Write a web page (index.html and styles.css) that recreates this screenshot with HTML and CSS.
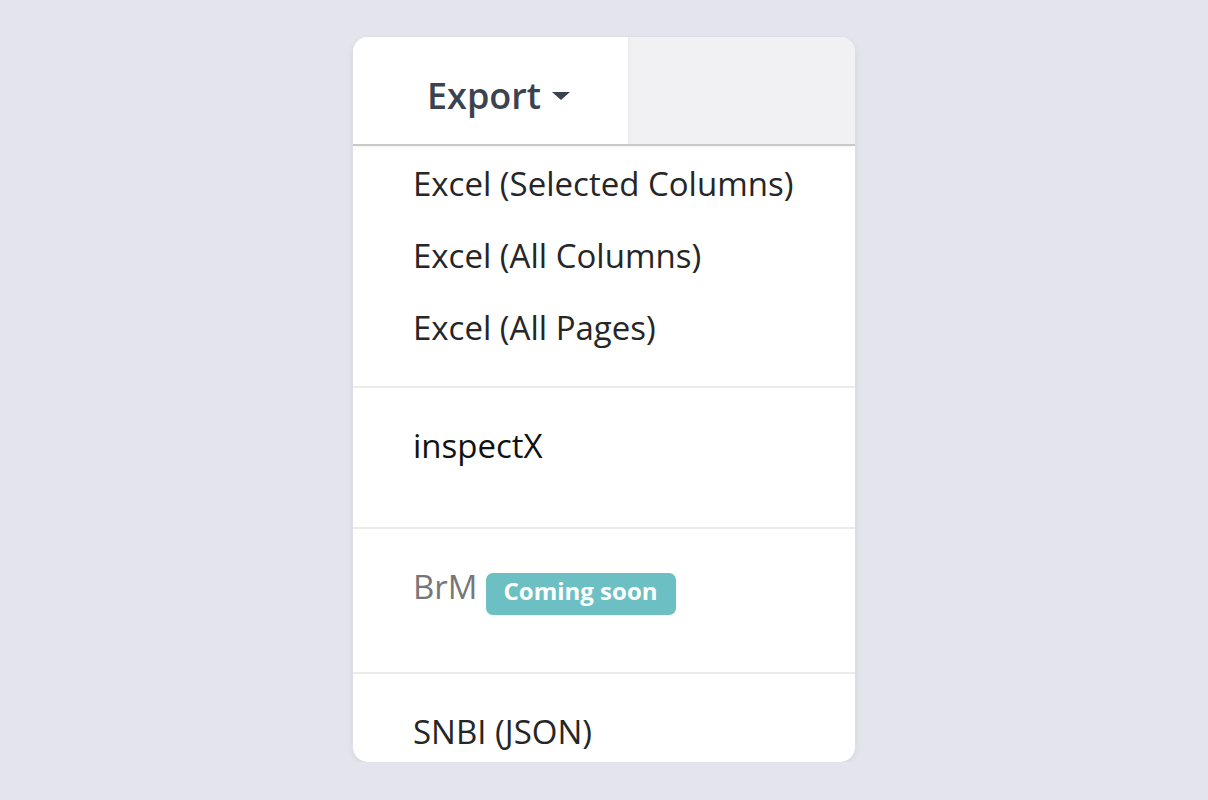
FILE: index.html
```html
<!DOCTYPE html>
<html lang="en">
<head>
<meta charset="utf-8">
<title>Export menu</title>
<link rel="stylesheet" href="styles.css">
</head>
<body>
<div class="stage">
  <div class="card">
    <div class="header">
      <div class="tab">Export<span class="caret"></span></div>
      <div class="tab-rest"></div>
    </div>
    <div class="section first">
      <div class="item">Excel (Selected Columns)</div>
      <div class="item">Excel (All Columns)</div>
      <div class="item">Excel (All Pages)</div>
    </div>
    <div class="section single">
      <div class="item dark">inspectX</div>
    </div>
    <div class="section single">
      <div class="item muted">BrM<span class="badge">Coming soon</span></div>
    </div>
    <div class="section">
      <div class="item">SNBI (JSON)</div>
    </div>
  </div>
</div>
</body>
</html>
```

FILE: styles.css
```css
html, body {
  margin: 0;
  padding: 0;
}
body {
  background: #e3e4ec;
  font-family: "Open Sans", "Noto Sans", sans-serif;
}
.stage {
  display: flex;
  justify-content: center;
  padding-top: 37px;
}
.card {
  width: 502px;
  height: 725px;
  background: #ffffff;
  border-radius: 15px;
  overflow: hidden;
  box-shadow: 0 2px 6px rgba(40, 40, 70, 0.08);
}
.header {
  display: flex;
  height: 107px;
  border-bottom: 2px solid #c9c9cc;
  box-shadow: 0 1px 2px rgba(0, 0, 0, 0.05);
}
.tab {
  width: 201px;
  padding: 34px 0 0 74px;
  background: #ffffff;
  font-size: 36px;
  line-height: 49px;
  font-weight: 600;
  color: #3c4350;
}
.caret {
  display: inline-block;
  width: 0;
  height: 0;
  margin-left: 11px;
  border-top: 8px solid #3c4350;
  border-left: 9px solid transparent;
  border-right: 9px solid transparent;
  vertical-align: 9px;
}
.tab-rest {
  flex: 1;
  background: #f1f1f3;
  box-shadow: inset 4px 0 4px -3px rgba(0, 0, 0, 0.04);
}
.section {
  padding: 22px 0 22px;
}
.section.first {
  padding-top: 2px;
}
.section.single {
  padding-bottom: 45px;
}
.section + .section {
  border-top: 2px solid #ebebed;
}
.item {
  padding: 12px 0 12px 60px;
  font-size: 33px;
  line-height: 48px;
  color: #262626;
  white-space: nowrap;
}
.item.dark {
  color: #111111;
}
.item.muted {
  color: #777777;
}
.badge {
  display: inline-block;
  margin-left: 8px;
  padding: 0 18px 6px;
  font-size: 24px;
  line-height: 36px;
  font-weight: 700;
  color: #ffffff;
  background: #6cbfc2;
  border-radius: 7px;
  vertical-align: -1px;
}
```
